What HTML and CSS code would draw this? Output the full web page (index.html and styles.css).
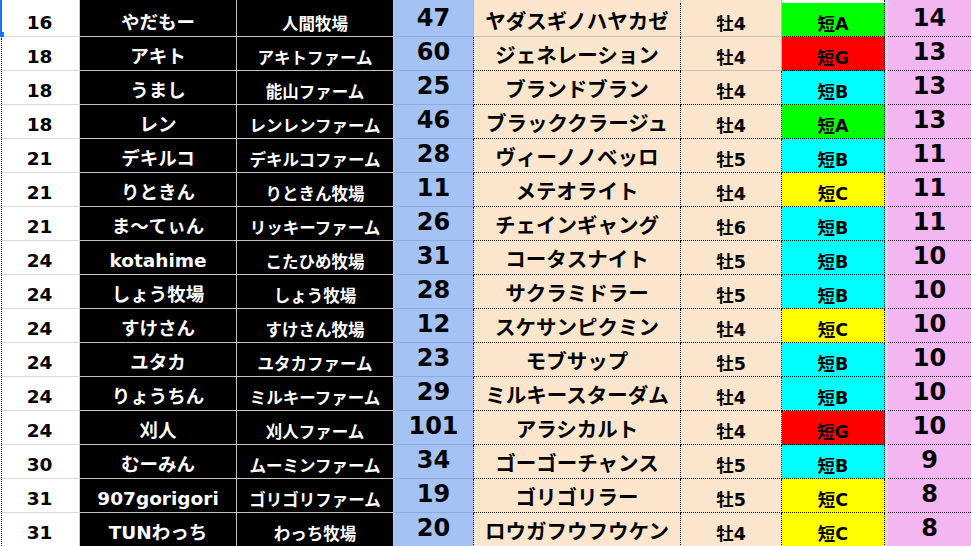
FILE: index.html
```html
<!DOCTYPE html>
<html lang="ja">
<head>
<meta charset="utf-8">
<title>Ranking</title>
<link rel="stylesheet" href="styles.css">
</head>
<body>
<div class="sheet">
  <div class="grid">
    <div class="row r0">
      <div class="c ra"></div><div class="c nm"></div><div class="c fm"></div><div class="c no"></div><div class="c hs"></div><div class="c sx"></div><div class="c gr"></div><div class="sp"></div><div class="c pt"></div>
    </div>
    <div class="row r1">
      <div class="c ra">16</div><div class="c nm">やだもー</div><div class="c fm">人間牧場</div><div class="c no">47</div><div class="c hs">ヤダスギノハヤカゼ</div><div class="c sx">牡4</div><div class="c gr g-a">短A</div><div class="sp"></div><div class="c pt">14</div>
    </div>
    <div class="row r2">
      <div class="c ra">18</div><div class="c nm">アキト</div><div class="c fm">アキトファーム</div><div class="c no">60</div><div class="c hs">ジェネレーション</div><div class="c sx">牡4</div><div class="c gr g-g">短G</div><div class="sp"></div><div class="c pt">13</div>
    </div>
    <div class="row">
      <div class="c ra">18</div><div class="c nm">うまし</div><div class="c fm">能山ファーム</div><div class="c no">25</div><div class="c hs">ブランドブラン</div><div class="c sx">牡4</div><div class="c gr g-b">短B</div><div class="sp"></div><div class="c pt">13</div>
    </div>
    <div class="row">
      <div class="c ra">18</div><div class="c nm">レン</div><div class="c fm">レンレンファーム</div><div class="c no">46</div><div class="c hs">ブラッククラージュ</div><div class="c sx">牡4</div><div class="c gr g-a">短A</div><div class="sp"></div><div class="c pt">13</div>
    </div>
    <div class="row">
      <div class="c ra">21</div><div class="c nm">デキルコ</div><div class="c fm">デキルコファーム</div><div class="c no">28</div><div class="c hs">ヴィーノノベッロ</div><div class="c sx">牡5</div><div class="c gr g-b">短B</div><div class="sp"></div><div class="c pt">11</div>
    </div>
    <div class="row">
      <div class="c ra">21</div><div class="c nm">りときん</div><div class="c fm">りときん牧場</div><div class="c no">11</div><div class="c hs">メテオライト</div><div class="c sx">牡4</div><div class="c gr g-c">短C</div><div class="sp"></div><div class="c pt">11</div>
    </div>
    <div class="row">
      <div class="c ra">21</div><div class="c nm">ま〜てぃん</div><div class="c fm">リッキーファーム</div><div class="c no">26</div><div class="c hs">チェインギャング</div><div class="c sx">牡6</div><div class="c gr g-b">短B</div><div class="sp"></div><div class="c pt">11</div>
    </div>
    <div class="row">
      <div class="c ra">24</div><div class="c nm">kotahime</div><div class="c fm">こたひめ牧場</div><div class="c no">31</div><div class="c hs">コータスナイト</div><div class="c sx">牡5</div><div class="c gr g-b">短B</div><div class="sp"></div><div class="c pt">10</div>
    </div>
    <div class="row">
      <div class="c ra">24</div><div class="c nm">しょう牧場</div><div class="c fm">しょう牧場</div><div class="c no">28</div><div class="c hs">サクラミドラー</div><div class="c sx">牡5</div><div class="c gr g-b">短B</div><div class="sp"></div><div class="c pt">10</div>
    </div>
    <div class="row">
      <div class="c ra">24</div><div class="c nm">すけさん</div><div class="c fm">すけさん牧場</div><div class="c no">12</div><div class="c hs">スケサンピクミン</div><div class="c sx">牡4</div><div class="c gr g-c">短C</div><div class="sp"></div><div class="c pt">10</div>
    </div>
    <div class="row">
      <div class="c ra">24</div><div class="c nm">ユタカ</div><div class="c fm">ユタカファーム</div><div class="c no">23</div><div class="c hs">モブサップ</div><div class="c sx">牡5</div><div class="c gr g-b">短B</div><div class="sp"></div><div class="c pt">10</div>
    </div>
    <div class="row">
      <div class="c ra">24</div><div class="c nm">りょうちん</div><div class="c fm">ミルキーファーム</div><div class="c no">29</div><div class="c hs">ミルキースターダム</div><div class="c sx">牡4</div><div class="c gr g-b">短B</div><div class="sp"></div><div class="c pt">10</div>
    </div>
    <div class="row">
      <div class="c ra">24</div><div class="c nm">刈人</div><div class="c fm">刈人ファーム</div><div class="c no">101</div><div class="c hs">アラシカルト</div><div class="c sx">牡4</div><div class="c gr g-g">短G</div><div class="sp"></div><div class="c pt">10</div>
    </div>
    <div class="row">
      <div class="c ra">30</div><div class="c nm">むーみん</div><div class="c fm">ムーミンファーム</div><div class="c no">34</div><div class="c hs">ゴーゴーチャンス</div><div class="c sx">牡5</div><div class="c gr g-b">短B</div><div class="sp"></div><div class="c pt">9</div>
    </div>
    <div class="row">
      <div class="c ra">31</div><div class="c nm">907gorigori</div><div class="c fm">ゴリゴリファーム</div><div class="c no">19</div><div class="c hs">ゴリゴリラー</div><div class="c sx">牡5</div><div class="c gr g-c">短C</div><div class="sp"></div><div class="c pt">8</div>
    </div>
    <div class="row">
      <div class="c ra">31</div><div class="c nm">TUNわっち</div><div class="c fm">わっち牧場</div><div class="c no">20</div><div class="c hs">ロウガフウフウケン</div><div class="c sx">牡4</div><div class="c gr g-c">短C</div><div class="sp"></div><div class="c pt">8</div>
    </div>
  </div>
  <div class="sel-bar"></div>
  <div class="sel-handle"></div>
  <div class="sel-marquee"></div>
</div>
</body>
</html>
```

FILE: styles.css
```css
html, body {
  margin: 0;
  padding: 0;
  background: #ffffff;
}

.sheet {
  position: relative;
  width: 971px;
  height: 546px;
  overflow: hidden;
}

.grid {
  display: grid;
  grid-template-columns: 80px 157px 157px 80px 207px 101px 103px 3px 83px;
  grid-template-rows: 3px repeat(16, 34px);
  font-family: "DejaVu Sans", "Noto Sans CJK JP", sans-serif;
  font-weight: 700;
  color: #000;
}

.row {
  display: contents;
}

.c {
  box-sizing: border-box;
  display: flex;
  justify-content: center;
  align-items: flex-end;
  line-height: 1;
  white-space: nowrap;
  overflow: hidden;
  border-right: 1px solid #c4c4c4;
  border-bottom: 1px solid #c4c4c4;
}

/* rank */
.ra {
  background: #ffffff;
  border-right-color: #cbcbcb;
  border-bottom-color: #dadada;
  font-size: 18.5px;
  padding-bottom: 4px;
}

/* owner name */
.nm {
  background: #000000;
  color: #ffffff;
  font-size: 18.5px;
  padding-bottom: 4px;
}

/* farm */
.fm {
  background: #000000;
  color: #ffffff;
  font-size: 16.5px;
  padding-bottom: 3px;
}

/* number */
.no {
  background: #a4c2f4;
  border-right: 1px dotted #000;
  border-bottom-color: #8faadc;
  font-size: 24px;
  padding-bottom: 6px;
}
.r0 .no, .r1 .no {
  border-right: 1px solid #aab6cc;
}

/* horse */
.hs {
  background: #fce5cd;
  border-right: 1px dotted #000;
  border-bottom: 1px dotted #000;
  font-size: 20.5px;
  padding-bottom: 4px;
}
.r0 .hs, .r1 .hs {
  border-bottom: 1px solid #c6c0b8;
}
.r0 .hs {
  border-right: 1px solid #c6c0b8;
}

/* sex / age */
.sx {
  background: #fce5cd;
  border-right: 1px dotted #000;
  border-bottom: 1px dotted #000;
  font-size: 17.5px;
  padding-bottom: 3px;
}
.r0 .sx, .r1 .sx, .r2 .sx {
  border-right: 1px solid #b9b9b9;
  border-bottom: 1px solid #c6c0b8;
}

/* grade */
.gr {
  border-right: 1px dotted #000;
  border-bottom: 1px dotted #000;
  font-size: 17.5px;
  padding-bottom: 3px;
}
.r0 .gr { background: #ffffff; }
.g-a { background: #00ff00; }
.g-g { background: #ff0000; }
.g-b { background: #00ffff; }
.g-c { background: #ffff00; }

.sp {
  background: #dcd4ee;
}

/* points */
.pt {
  background: #f4b6f0;
  border-right: none;
  border-bottom: 1px dotted #000;
  font-size: 24px;
  padding-bottom: 6px;
}

/* selection overlay */
.sel-bar {
  position: absolute;
  left: 0;
  top: 0;
  width: 2px;
  height: 33px;
  background: #1a73e8;
}
.sel-handle {
  position: absolute;
  left: 0;
  top: 32px;
  width: 4px;
  height: 5px;
  background: #1a73e8;
}
.sel-marquee {
  position: absolute;
  left: 1px;
  top: 38px;
  width: 0;
  height: 510px;
  border-left: 1px dotted #000;
}
```
